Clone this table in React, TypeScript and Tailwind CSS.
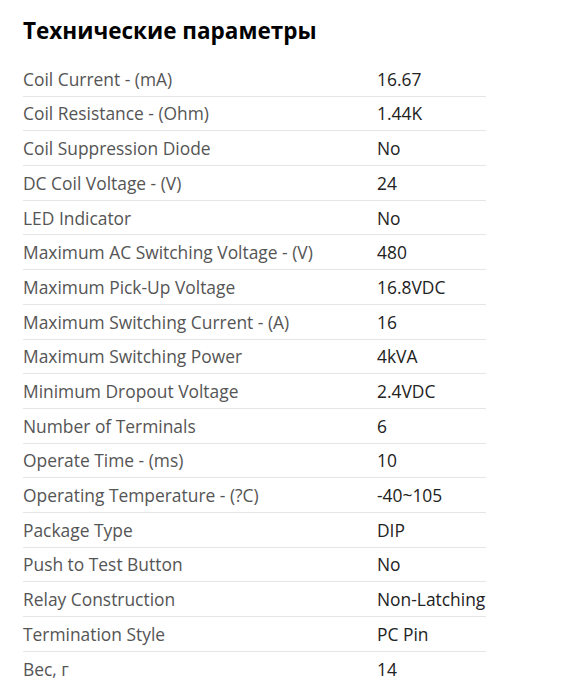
const specs: [string, string][] = [
  ["Coil Current - (mA)", "16.67"],
  ["Coil Resistance - (Ohm)", "1.44K"],
  ["Coil Suppression Diode", "No"],
  ["DC Coil Voltage - (V)", "24"],
  ["LED Indicator", "No"],
  ["Maximum AC Switching Voltage - (V)", "480"],
  ["Maximum Pick-Up Voltage", "16.8VDC"],
  ["Maximum Switching Current - (A)", "16"],
  ["Maximum Switching Power", "4kVA"],
  ["Minimum Dropout Voltage", "2.4VDC"],
  ["Number of Terminals", "6"],
  ["Operate Time - (ms)", "10"],
  ["Operating Temperature - (?C)", "-40~105"],
  ["Package Type", "DIP"],
  ["Push to Test Button", "No"],
  ["Relay Construction", "Non-Latching"],
  ["Termination Style", "PC Pin"],
  ["Вес, г", "14"],
];

export default function App() {
  return (
    <div className="min-h-screen bg-white px-[23px] pt-[16px] font-['Open_Sans',sans-serif]">
      <h2 className="text-[22.5px] font-bold leading-[30px] text-black">Технические параметры</h2>
      <div className="mt-[16px] w-[463px]">
        {specs.map(([label, value], i) => (
          <div
            key={label}
            className={`flex h-[34.7px] items-center text-[17.4px] ${
              i < specs.length - 1 ? "border-b border-[#e6e6e6]" : ""
            }`}
          >
            <div className="w-[354px] text-[#555555]">{label}</div>
            <div className="text-[#222222]">{value}</div>
          </div>
        ))}
      </div>
    </div>
  );
}
